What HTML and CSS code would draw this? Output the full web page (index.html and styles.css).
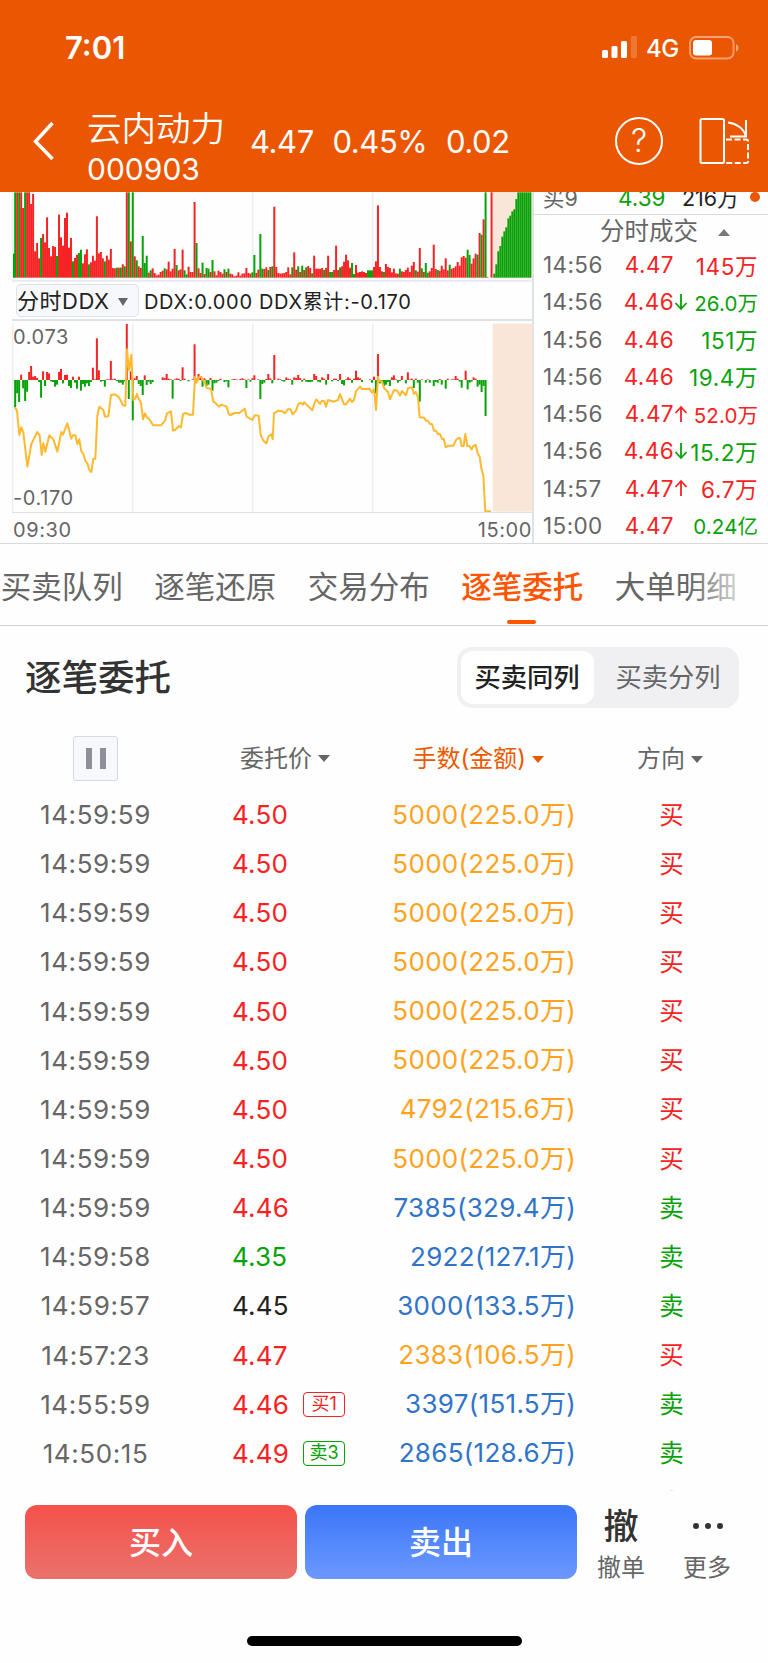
FILE: index.html
```
<!DOCTYPE html>
<html lang="zh-CN">
<head>
  <meta charset="UTF-8">
  <title>云内动力 000903</title>
  <link rel="stylesheet" href="styles.css">
</head>
<body>

  <header>
    <div class="status">
      <span class="clock">7:01</span>
      <svg class="signal" width="36" height="23" viewBox="0 0 36 23" fill="#fff">
        <rect x="0" y="14" width="6" height="8" rx="1.5"/>
        <rect x="9.5" y="10" width="6" height="12" rx="1.5"/>
        <rect x="19" y="5" width="6" height="17" rx="1.5"/>
        <rect x="29" y="0" width="6" height="22" rx="1.5" opacity=".2"/>
      </svg>
      <span class="net">4G</span>
      <svg width="50" height="24" viewBox="0 0 50 24">
        <rect x="1" y="1" width="43.5" height="21.5" rx="6" fill="none" stroke="#fff" stroke-opacity=".45" stroke-width="1.8"/>
        <path d="M47 8v8q2.5-1.500 2.500-4t-2.500-4z" fill="#fff" opacity=".5"/>
        <rect x="4" y="4" width="19" height="15.500" rx="3" fill="#fff"/>
      </svg>
    </div>
    <div class="nav">
      <svg class="back" width="24" height="42" viewBox="0 0 24 42"><path d="M21.500 3L4.500 21.500l17 17.500" fill="none" stroke="#fff" stroke-width="3.500"/></svg>
      <div class="stock">
        <div class="name">云内动力</div>
        <div class="code">000903</div>
      </div>
      <div class="quote"><span>4.47</span><span>0.45%</span><span>0.02</span></div>
      <div class="help">?</div>
      <svg class="rotate" width="52" height="50" viewBox="0 0 52 50" fill="none" stroke="#fff" stroke-width="2">
        <rect x="2.5" y="3" width="23.5" height="44" rx="1.5"/>
        <path d="M30 6.500c9 1 16 6.500 17.500 13M48 4v16.500H32"/>
        <path d="M28 23.500h20.500a1.500 1.500 0 0 1 1.500 1.500v20.500a1.500 1.500 0 0 1-1.500 1.500H28" stroke-dasharray="6 2.500"/>
      </svg>
    </div>
  </header>

  <section class="market">
    <div class="charts">
      <svg id="volume" width="521" height="90" viewBox="0 0 1563 270"></svg>
      <div class="ddx-bar">
        <span class="ddx-select">分时DDX<i class="tri"></i></span>
        <span class="ddx-text">DDX:0.000 DDX累计:-0.170</span>
      </div>
      <div class="ddx-chart">
        <svg id="ddx" width="521" height="192" viewBox="0 0 1563 576"></svg>
        <span class="max">0.073</span>
        <span class="min">-0.170</span>
      </div>
      <div class="axis"><span>09:30</span><span>15:00</span></div>
    </div>
    <div class="deals">
      <div class="level"><span>买9</span><span class="green">4.39</span><span class="black">216万</span><i></i></div>
      <div class="deals-title">分时成交<i class="tri up"></i></div>
      <div id="deals"></div>
    </div>
  </section>

  <nav class="tabs">
    <span>买卖队列</span>
    <span>逐笔还原</span>
    <span>交易分布</span>
    <span class="on">逐笔委托</span>
    <span>大单明细</span>
  </nav>

  <section class="orders">
    <div class="title">
      <h2>逐笔委托</h2>
      <div class="switch"><span class="on">买卖同列</span><span>买卖分列</span></div>
    </div>
    <div class="row head">
      <span class="time"><button class="pause"><i></i><i></i></button></span>
      <span class="price">委托价<i class="tri"></i></span>
      <span class="amount orange">手数(金额)<i class="tri"></i></span>
      <span class="side">方向<i class="tri"></i></span>
    </div>
    <div class="list" id="orders"></div>
  </section>

  <footer>
    <div class="actions">
      <button class="buy">买入</button>
      <button class="sell">卖出</button>
      <div class="tool"><b>撤</b><span>撤单</span></div>
      <div class="tool"><b class="dots"><i></i><i></i><i></i></b><span>更多</span></div>
    </div>
    <div class="home"></div>
  </footer>

  <script src="app.js"></script>
</body>
</html>
```
FILE: styles.css
```
* { box-sizing: border-box; }

body {
  margin: 0;
  width: 768px;
  height: 1663px;
  overflow: hidden;
  background-color: #fefefe;
  color: #666;
  font-family: Inter, "Noto Sans CJK SC", sans-serif;
}

button { border: none; font-family: inherit; }

.red { color: #f52323; }
.green { color: #07a207; }
.black { color: #222; }
.orange { color: #eb5a00; }
.gold { color: #ffa31f; }
.blue { color: #2f74c8; }

.tri {
  display: inline-block;
  border: 6.5px solid transparent;
  border-top: 7px solid currentColor;
  border-bottom: 0;
}
.tri.up {
  border-top: 0;
  border-bottom: 7px solid #77797f;
}

/* header */
header {
  height: 192px;
  background-color: #eb5602;
  color: #fff;
}

.status {
  display: flex;
  align-items: center;
  height: 95px;
  padding: 0 29px 0 65px;
}
.clock { flex: 1; font-size: 31px; font-weight: 600; }
.net { font-size: 24px; font-weight: 500; letter-spacing: -0.3px; margin: 2px 10px 0 8px; }

.nav {
  display: flex;
  align-items: center;
  height: 92px;
  padding: 0 18px 0 31px;
}
.stock { width: 163px; margin-left: 32px; padding-top: 15px; }
.name { font-size: 34.500px; line-height: 41px; font-weight: 350; }
.code { font-size: 30px; line-height: 40px; }
.quote { flex: 1; font-size: 31px; letter-spacing: -0.4px; }
.quote span { margin-right: 18.500px; }
.help {
  width: 48px;
  height: 48px;
  border: 2px solid #fff;
  border-radius: 50%;
  font-size: 32px;
  font-weight: 300;
  line-height: 44px;
  text-align: center;
  margin-right: 35px;
}

/* charts and deals */
.market {
  display: flex;
  height: 352px;
  border-bottom: 1.500px solid #d4dade;
}
.charts { width: 534px; padding-left: 12px; border-right: 2px solid #dde2e7; }
.charts svg { display: block; }

.ddx-bar {
  display: flex;
  align-items: center;
  height: 39px;
  border-bottom: 2px solid #dde2e7;
  color: #222;
  font-size: 20px;
}
.ddx-select {
  width: 123px;
  height: 33px;
  margin: 0 5px 0 4px;
  border: 1.500px solid #dde1e8;
  border-radius: 5px;
  background-color: #f7f8fb;
  line-height: 32px;
  font-size: 22px;
  letter-spacing: 0.5px;
  white-space: nowrap;
}
.ddx-select .tri {
  color: #666;
  border-width: 8px 5px 0;
  margin: 0 0 3px 8px;
}
.ddx-text { letter-spacing: 0.65px; white-space: nowrap; }

.ddx-chart { position: relative; font-size: 20px; height: 192px; letter-spacing: 0.6px; }
.max { position: absolute; left: 1px; top: 4px; }
.min { position: absolute; left: 1px; bottom: 3px; }

.axis {
  display: flex;
  justify-content: space-between;
  padding-left: 1px;
  line-height: 34px;
  font-size: 20px;
  letter-spacing: 0.6px;
}

.deals { flex: 1; overflow: hidden; }
.level {
  display: flex;
  align-items: center;
  height: 23px;
  padding-left: 9px;
  border-bottom: 1.500px solid #d4dade;
  font-size: 21.500px;
  line-height: 22px;
  white-space: nowrap;
}
.level span { position: relative; top: -5px; width: 75px; }
.level .green { width: 64px; font-size: 22.500px; }
.level .black { width: 68px; }
.level i {
  width: 10px;
  height: 10px;
  border-radius: 50%;
  background-color: #eb5602;
  margin-top: -12px;
}
.deals-title {
  height: 31px;
  line-height: 32px;
  padding-left: 66px;
  font-size: 24.500px;
}
.deals-title .tri { margin: 0 0 4px 20px; }
.deal {
  display: grid;
  grid-template-columns: 64px 67px 15px 68.500px;
  align-items: center;
  height: 37.250px;
  padding-left: 9px;
  font-size: 22.500px;
  letter-spacing: 0.4px;
  white-space: nowrap;
}
.deal .p { text-align: right; }
.deal .v { justify-self: end; letter-spacing: 0.6px; margin-right: -0.600px; }
.deal .small { font-size: 20.500px; letter-spacing: 0.1px; }
.deal svg { display: block; }

/* tabs */
.tabs {
  position: relative;
  display: flex;
  gap: 31.500px;
  height: 81.500px;
  padding-left: 0.700px;
  border-bottom: 1.500px solid #d0d3d6;
  font-size: 30.500px;
  line-height: 85px;
  white-space: nowrap;
}
.tabs .on { position: relative; color: #ff5500; font-weight: 500; }
.tabs .on::after {
  content: "";
  position: absolute;
  left: 46px;
  bottom: 1px;
  width: 29px;
  height: 4px;
  border-radius: 2px;
  background-color: #ff5500;
}
.tabs::after {
  content: "";
  position: absolute;
  right: 0;
  top: 0;
  width: 80px;
  height: 78px;
  background: linear-gradient(to right, rgba(254,254,254,0), #fefefe 85%);
}

/* orders */
.title {
  display: flex;
  justify-content: space-between;
  align-items: center;
  padding: 21px 29px 0 25px;
}
h2 { margin: 0; color: #333; font-size: 36.500px; font-weight: 500; line-height: 61px; padding-top: 1px; margin-bottom: -1px; }
.switch {
  display: flex;
  width: 282px;
  height: 61px;
  padding: 4px;
  border-radius: 15px;
  background-color: #f0f0f3;
  font-size: 26.300px;
  line-height: 53px;
  text-align: center;
}
.switch span { flex: 1; padding-left: 7px; }
.switch .on { flex: 0 0 133px; padding: 0 1px 0 0; border-radius: 12px; background-color: #fff; color: #222; font-weight: 500; }

.row {
  display: grid;
  grid-template-columns: 191px 179px 206px 192px;
  align-items: center;
  height: 49.150px;
  font-size: 26px;
  line-height: 38px;
  white-space: nowrap;
}
.time { text-align: center; letter-spacing: 0.6px; }
.price { padding-left: 41px; display: flex; align-items: center; letter-spacing: 0.2px; }
.amount { text-align: right; letter-spacing: 0.3px; margin-top: -1px; }
.side { text-align: center; font-size: 24.500px; margin-top: -1px; padding-right: 1px; }

/* bottom padding is smaller, the rows follow right below */
.head { height: 82px; padding-top: 20px; font-size: 24px; }
.head .price { padding-left: 49px; margin-top: 0; letter-spacing: 0; }
.head .price .tri { margin: 0 0 0 6px; }
.head .amount { margin-right: 19px; padding-right: 32px; letter-spacing: 0; margin-top: 0; }
.head .amount .tri { margin: 0 -19px 4px 6px; }
.head .side { font-size: 24px; text-align: left; padding-left: 61px; margin-top: 0; }
.head .side .tri { margin: 0 0 4px 6px; }

.pause {
  display: flex;
  justify-content: center;
  align-items: center;
  gap: 8px;
  width: 45px;
  height: 45px;
  margin: 0 auto;
  border: 1.500px solid #d5dae2;
  border-radius: 3px;
  background-color: #f7f8fb;
}
.pause i { width: 6px; height: 21px; background-color: #8f8f98; }

.list { height: 701px; padding-top: 1px; overflow: hidden; }
.tag {
  width: 42px;
  height: 25px;
  margin-left: 14px;
  border: 1.500px solid currentColor;
  border-radius: 4px;
  font-size: 18px;
  font-style: normal;
  line-height: 22px;
  letter-spacing: 0;
  text-align: center;
}

/* bottom bar */
.actions { display: flex; padding: 14px 0 0 25px; height: 90px; }
.actions button {
  width: 272px;
  height: 74px;
  margin-right: 8px;
  padding: 0 0 3px;
  border-radius: 12px;
  color: #fff;
  font-size: 32px;
  font-weight: 500;
}
.buy { background: linear-gradient(#f5514a, #ea726c); }
.sell { background: linear-gradient(#3b76f8, #6c98fe); }
.tool { width: 86px; text-align: center; font-size: 24px; margin-left: -7px; }
.tool + .tool { margin-left: 0; }
.tool b { display: block; height: 43px; color: #333; font-size: 35px; font-weight: 500; line-height: 42px; }
.tool span { display: block; line-height: 40px; }
.tool .dots { display: flex; justify-content: center; align-items: center; gap: 6px; padding-left: 2px; }
.dots i {
  width: 6px;
  height: 6px;
  border-radius: 50%;
  background-color: #333;
}
.home {
  width: 275px;
  height: 10.500px;
  margin: 55px 0 0 247px;
  border-radius: 6px;
  background-color: #000;
}
```
FILE: app.js
```
// bar heights, positive = red, negative = green, 3 units = 1px
const volume = [
  -256, 256, -256, 256, 209, -256, 256, 256, 221, 251, 79, 104, 58, -119, 131, 106, 181, 89, 64, 95,
  92, -65, 189, 121, 96, 179, 195, 90, 119, -49, 59, 69, -74, -84, 43, 70, 85, -40, 46, 66,
  51, 184, 73, 77, 58, -49, 66, 54, 86, 29, 28, -30, 30, -30, 40, -34, 256, -256, 109, -256,
  64, -52, 34, 29, -125, -44, -66, 15, -22, 28, 14, 7, 9, 17, 21, -28, 25, 48, 19, 27,
  86, -38, 22, 25, 84, -22, -10, 33, 17, 17, 227, -104, 28, 14, -45, 11, -29, -27, 17, -53,
  19, 7, 21, 17, 12, -25, 17, -27, 12, 10, 4, 6, 16, 6, 12, 13, 29, 14, 12, -16,
  -68, 14, 24, -131, -27, 26, 31, -23, 32, -34, 213, 32, 14, 12, 13, 14, 17, 31, 10, -31,
  76, 24, -34, 17, -36, 23, -31, 35, 29, -13, 66, 27, 27, 26, 29, -23, 29, 66, -17, -17,
  23, 96, 23, -31, 34, 48, 69, 52, 30, -44, -11, 38, 15, 17, 19, 17, 14, -22, -22, -22,
  32, 49, 217, 32, 19, -17, 41, 32, 29, 16, 27, 13, 12, -27, 19, 17, 23, 30, 17, 36,
  47, -22, 18, 89, -28, 17, -44, -15, 19, 29, 99, 26, -23, 21, 36, 25, 58, 22, -39, 27,
  29, 34, 47, 36, 61, 65, 60, -84, -68, 42, 58, 72, -69, 134, -129, 175, -256, 2, 0, 256
];

const auction = [12, 40, 79, 95, 123, 139, 151, 178, 186, 199, 205, 236, 256, 256, 256, 256, 256, 256, 256];

const ddx = [
  -82, -40, -66, 16, -25, -63, -35, 24, 42, 10, 12, 6, -6, -53, 26, -18, 24, 20, -4, -6,
  -20, -14, 24, 33, -10, 15, 16, -18, -24, 10, -8, -26, 10, -32, -12, -20, -10, -18, -6, 37,
  2, 125, 29, -5, -3, -20, 2, 2, 57, 2, 4, -3, -8, -8, -14, -4, 168, -57, 26, -121,
  5, 12, -12, -18, -45, 14, -15, -5, -12, -6, 0, 0, 0, 0, 8, 6, 18, 4, 2, -56,
  2, 5, 4, -3, 38, 4, 0, -4, 0, 2, 107, 4, 18, 12, -20, 5, -18, -14, 6, -32,
  -10, -8, -3, 4, 0, -6, -4, -22, 0, 2, 3, 2, 0, 3, 5, 2, -24, 2, -5, 5,
  14, 0, 2, -57, -12, -8, 3, 18, 5, -10, 75, 0, 4, 2, -3, -5, 8, 4, 2, -14,
  8, 6, 15, 6, -5, 4, -5, -6, -6, -5, 18, 12, -5, -7, 8, 4, -14, 18, 0, -4,
  4, 4, -3, 18, -12, -16, 2, 8, 4, -8, 4, 28, 8, 5, -6, 0, 0, 0, 2, -8,
  10, -40, 78, -10, -5, -18, -14, -6, -18, 8, 14, 2, -8, -3, 12, 0, -10, 23, 2, 4,
  -24, 4, -8, -65, 2, 0, -8, 2, -8, 0, -18, -6, -8, 3, -14, 0, -26, 4, 0, 2,
  2, 12, 4, -5, -23, 0, 28, -28, -8, -5, 8, 4, -20, -14, -36, -18, -108
];

const line = "45,293 51,302 58,375 64,352 70,368 82,470 94,402 112,366 119,376 125,435 130,400 136,425 148,376 160,388 172,425 184,366 189,374 202,340 214,386 219,376 226,376 232,402 238,388 244,424 250,432 256,452 262,460 268,480 274,486 280,447 286,446 292,318 298,290 310,300 315,320 325,319 333,255 345,253 357,262 369,286 376,287 381,118 387,180 394,135 400,270 406,265 411,252 417,268 423,278 429,328 435,310 441,323 447,326 459,346 483,346 495,332 501,310 513,304 519,362 525,360 537,348 543,352 549,312 557,309 567,314 579,314 585,200 590,218 598,200 604,202 615,220 620,234 633,237 640,275 645,278 657,290 664,284 680,290 686,312 692,315 704,309 718,309 734,296 740,320 757,330 764,316 776,317 782,374 790,392 799,400 806,378 814,373 818,388 822,310 835,302 847,304 854,310 864,298 872,298 878,313 888,302 895,282 902,278 908,284 913,277 937,301 943,280 949,268 960,282 966,272 973,274 978,290 984,270 1002,275 1014,270 1020,252 1032,283 1038,283 1050,266 1056,276 1062,270 1068,244 1080,230 1086,237 1108,236 1116,248 1122,238 1128,300 1134,200 1138,214 1146,214 1152,234 1164,246 1170,268 1182,240 1192,242 1200,257 1206,243 1218,256 1224,235 1236,232 1242,252 1248,246 1254,262 1259,322 1272,323 1278,332 1284,333 1290,342 1296,342 1302,362 1308,362 1314,373 1320,372 1326,387 1331,386 1337,412 1345,407 1360,407 1368,390 1376,384 1380,384 1385,408 1391,408 1396,372 1402,408 1408,408 1415,418 1420,408 1427,405 1433,430 1439,440 1444,475 1450,497 1456,604 1473,604";

function rect(x, y, w, h, color) {
  return `<rect x="${x}" y="${y}" width="${w}" height="${h}" fill="${color}"/>`;
}

function bars(data, base) {
  return data.map((v, i) => {
    const x = 6.5 + i * 5.98;
    const y = base === 257 || v > 0 ? base - Math.abs(v) : base;
    return rect(x, y, 5.98, Math.abs(v), v > 0 ? "#f52323" : "#07a207");
  }).join("");
}

function grid(top, h) {
  return rect(1442, top, 119, h, "#fae6d9") +
    [0, 360, 720, 1080].map(x => rect(x + 1, top, 3, h, "#e2e6ee")).join("");
}

document.getElementById("volume").innerHTML =
  grid(0, 257) + rect(3, 185, 6, 72, "#07a207") + bars(volume, 257) +
  auction.map((v, i) => rect(1444 + i * 6, 257 - v, 6, v, i % 2 ? "#0aa50a" : "#059c05")).join("") +
  rect(0, 264, 1563, 5, "#e6e9ee");

document.getElementById("ddx").innerHTML =
  grid(8, 564) + bars(ddx, 177) +
  `<polyline points="${line}" transform="translate(-36 -33)" fill="none" stroke="#ffb92e" stroke-width="6" stroke-linejoin="round"/>` +
  rect(0, 573, 1563, 3, "#dde2e7");

const deals = [
  ["14:56", "4.47", "", "145万", "red"],
  ["14:56", "4.46", "down", "26.0万", "green", "small"],
  ["14:56", "4.46", "", "151万", "green"],
  ["14:56", "4.46", "", "19.4万", "green"],
  ["14:56", "4.47", "up", "52.0万", "red", "small"],
  ["14:56", "4.46", "down", "15.2万", "green"],
  ["14:57", "4.47", "up", "6.7万", "red"],
  ["15:00", "4.47", "", "0.24亿", "green", "small"]
];

const arrows = {
  up: "M7 17V2M1.500 8L7 2l5.500 6",
  down: "M7 1v15M1.500 10L7 16l5.500-6"
};

document.getElementById("deals").innerHTML = deals.map(([t, p, a, v, c, size]) => `
  <div class="deal">
    <span>${t}</span>
    <span class="p red">${p}</span>
    <span class="${c}">${a ? `<svg width="14" height="18" fill="none" stroke="currentColor" stroke-width="1.8"><path d="${arrows[a]}"/></svg>` : ""}</span>
    <span class="v ${c} ${size || ""}">${v}</span>
  </div>`).join("");

const orders = [
  ["14:59:59", "4.50", "red", "5000(225.0万)", "买"],
  ["14:59:59", "4.50", "red", "5000(225.0万)", "买"],
  ["14:59:59", "4.50", "red", "5000(225.0万)", "买"],
  ["14:59:59", "4.50", "red", "5000(225.0万)", "买"],
  ["14:59:59", "4.50", "red", "5000(225.0万)", "买"],
  ["14:59:59", "4.50", "red", "5000(225.0万)", "买"],
  ["14:59:59", "4.50", "red", "4792(215.6万)", "买"],
  ["14:59:59", "4.50", "red", "5000(225.0万)", "买"],
  ["14:59:59", "4.46", "red", "7385(329.4万)", "卖"],
  ["14:59:58", "4.35", "green", "2922(127.1万)", "卖"],
  ["14:59:57", "4.45", "black", "3000(133.5万)", "卖"],
  ["14:57:23", "4.47", "red", "2383(106.5万)", "买"],
  ["14:55:59", "4.46", "red", "3397(151.5万)", "卖", "买1"],
  ["14:50:15", "4.49", "red", "2865(128.6万)", "卖", "卖3"],
  ["14:50:02", "4.46", "red", "2500(111.5万)", "卖"]
];

document.getElementById("orders").innerHTML = orders.map(([t, p, c, n, side, tag]) => `
  <div class="row">
    <span class="time">${t}</span>
    <span class="price ${c}">${p}${tag ? `<i class="tag ${tag[0] === "买" ? "red" : "green"}">${tag}</i>` : ""}</span>
    <span class="amount ${side === "买" ? "gold" : "blue"}">${n}</span>
    <span class="side ${side === "买" ? "red" : "green"}">${side}</span>
  </div>`).join("");
```
